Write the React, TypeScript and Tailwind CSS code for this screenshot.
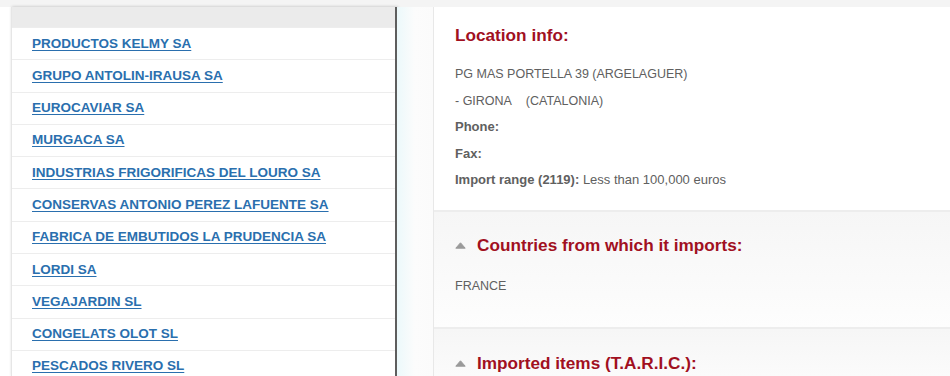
import React from "react";

const COMPANIES = [
  "PRODUCTOS KELMY SA",
  "GRUPO ANTOLIN-IRAUSA SA",
  "EUROCAVIAR SA",
  "MURGACA SA",
  "INDUSTRIAS FRIGORIFICAS DEL LOURO SA",
  "CONSERVAS ANTONIO PEREZ LAFUENTE SA",
  "FABRICA DE EMBUTIDOS LA PRUDENCIA SA",
  "LORDI SA",
  "VEGAJARDIN SL",
  "CONGELATS OLOT SL",
  "PESCADOS RIVERO SL",
];

function Caret() {
  return (
    <svg width="11" height="7" viewBox="0 0 11 7" className="shrink-0">
      <path d="M5.5 0.8 L10.2 6.2 L0.8 6.2 Z" fill="#9a9a9a" stroke="#9a9a9a" strokeWidth="1" strokeLinejoin="round" />
    </svg>
  );
}

function SectionTitle({ children, caret }: { children: React.ReactNode; caret?: boolean }) {
  return (
    <div className="flex items-center gap-[11px]">
      {caret && <Caret />}
      <h2 className="text-[17.2px] font-bold leading-none text-[#a1101f]">{children}</h2>
    </div>
  );
}

export default function App() {
  return (
    <div
      className="w-[950px] h-[376px] overflow-hidden bg-[#f4f4f4] flex flex-col"
      style={{ fontFamily: '"Liberation Sans", Arial, sans-serif' }}
    >
      <div className="h-[7px] shrink-0 bg-[#f4f4f4]" />
      <div className="flex flex-1 min-h-0 bg-white">
        <div className="w-[11px] shrink-0 bg-white" />

        {/* company list */}
        <div className="w-[386px] shrink-0 bg-white border-l border-[#e6e6e6] border-r-2 border-r-[#5e5e5e] shadow-[1px_0_3px_rgba(0,0,0,0.25)] flex flex-col">
          <div className="h-[20px] shrink-0 bg-[#ebebeb]" />
          {COMPANIES.map((c) => (
            <div key={c} className="h-[32.3px] shrink-0 flex items-center pl-[20px] border-t border-[#ededed] first:border-t-0">
              <a
                href="#"
                className="text-[13.5px] font-bold text-[#2a6fae] underline decoration-[#2a6fae] underline-offset-[2px]"
              >
                {c}
              </a>
            </div>
          ))}
        </div>

        <div className="w-[36px] shrink-0 bg-gradient-to-r from-[#ecf9fb] via-[#fcfcfc] to-[#fbfbfb]" />

        {/* detail card */}
        <div className="flex-1 flex flex-col border-l border-[#e8e8e8] bg-white">
          <section className="h-[203px] shrink-0 pl-[21px] pt-[20px]">
            <SectionTitle>Location info:</SectionTitle>
            <div className="mt-[23px] flex flex-col gap-[12.5px] text-[12.5px] leading-[14px] text-[#606060]">
              <p>PG MAS PORTELLA 39 (ARGELAGUER)</p>
              <p>- GIRONA&nbsp;&nbsp;&nbsp;&nbsp;(CATALONIA)</p>
              <p className="font-bold text-[13px]">Phone:</p>
              <p className="font-bold text-[13px]">Fax:</p>
              <p className="text-[13px]">
                <span className="font-bold">Import range (2119):</span> Less than 100,000 euros
              </p>
            </div>
          </section>

          <section className="h-[117px] shrink-0 border-t-2 border-[#ededed] bg-gradient-to-b from-[#f6f6f6] to-[#fdfdfd] pl-[21px] pt-[25px]">
            <SectionTitle caret>Countries from which it imports:</SectionTitle>
            <p className="mt-[25px] text-[12.5px] leading-[14px] text-[#606060]">FRANCE</p>
          </section>

          <section className="flex-1 border-t-2 border-[#ededed] bg-gradient-to-b from-[#f6f6f6] to-[#fbfbfb] pl-[21px] pt-[26px]">
            <SectionTitle caret>Imported items (T.A.R.I.C.):</SectionTitle>
          </section>
        </div>
      </div>
    </div>
  );
}
